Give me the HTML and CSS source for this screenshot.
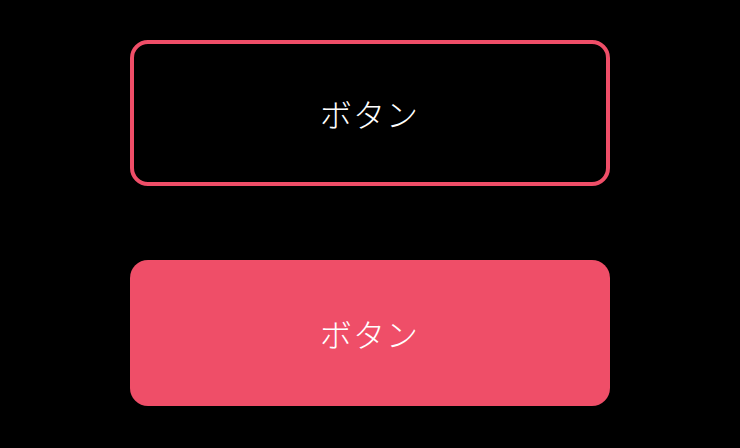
FILE: index.html
```html
<!DOCTYPE html>
<html lang="ja">
<head>
    <meta charset="UTF-8">
    <meta name="viewport" content="width=device-width, initial-scale=1.0">
    <title>ボタン</title>
    <link rel="stylesheet" href="styles.css">
</head>
<body>
    <div class="buttons">
        <button class="btn btn-outline">ボタン</button>
        <button class="btn btn-fill">ボタン</button>
    </div>
</body>
</html>
```

FILE: styles.css
```css
* { margin: 0; padding: 0; box-sizing: border-box; }
body { background-color: black; height: 100vh; display: flex; justify-content: center; padding-top: 40px;
       font-family: "Noto Sans CJK JP", "Noto Sans", sans-serif; }
.buttons { display: flex; flex-direction: column; gap: 74px; width: 480px; margin-left: -1px; }
.btn { height: 146px; border-radius: 18px; font-family: inherit; font-size: 32px; font-weight: 300;
       letter-spacing: 1px; color: white; cursor: pointer; display: flex; align-items: center;
       justify-content: center; }
.btn-outline { background-color: black; border: 4px solid #ef4e68; }
.btn-fill { background-color: #ef4e68; border: none; }
.btn-fill:hover { background-color: #e0435c; }
```
